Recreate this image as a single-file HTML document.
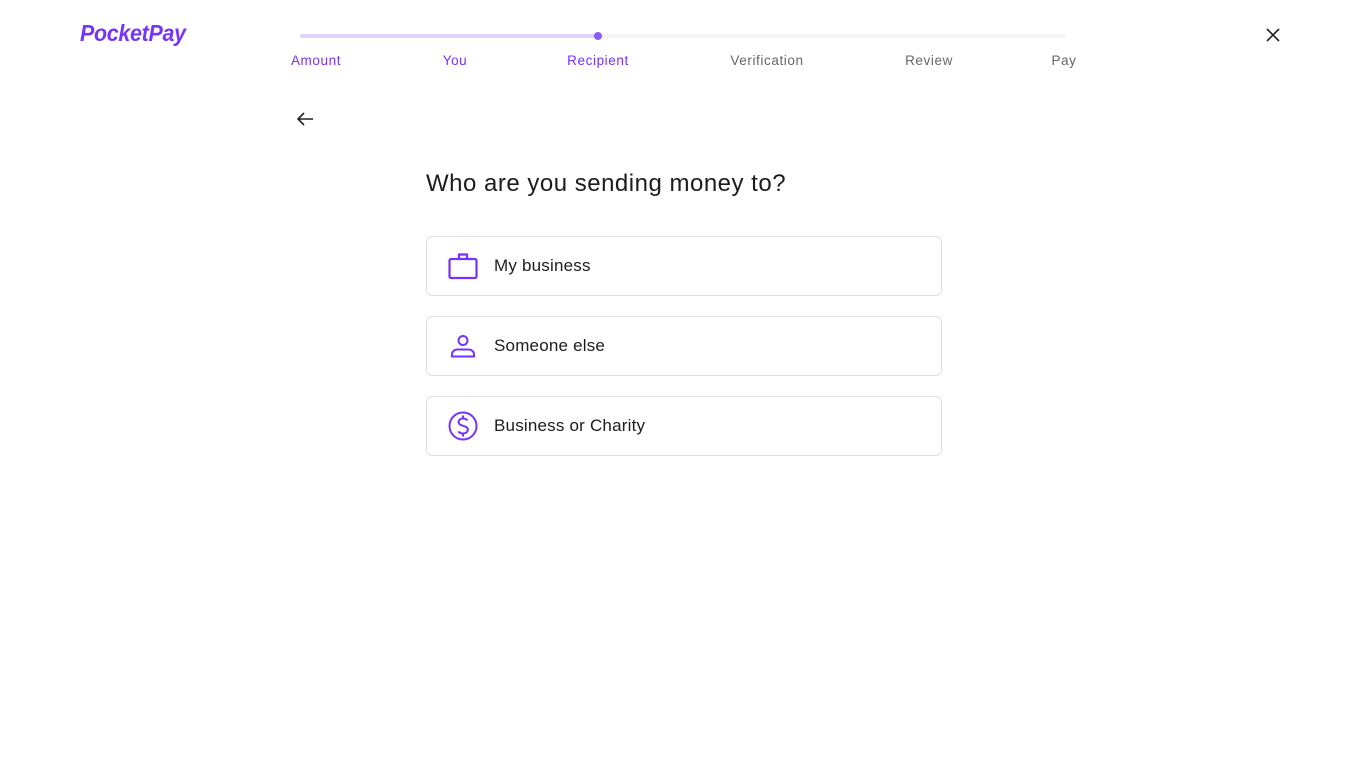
<!DOCTYPE html>
<html><head><style>
body{margin:0;width:1366px;height:768px;background:#fff;font-family:"Liberation Sans",sans-serif;position:relative;overflow:hidden}
.logo{position:absolute;left:80px;top:20px;font-size:23px;font-weight:bold;font-style:italic;color:#7633f9;letter-spacing:-0.3px;transform:scaleX(0.93);transform-origin:left}
.track{position:absolute;left:300px;top:34px;width:766px;height:4px;background:#f5f5f7;border-radius:2px}
.fill{position:absolute;left:300px;top:34px;width:298px;height:4px;background:#e0d2fd;border-radius:2px}
.dot{position:absolute;left:594px;top:32px;width:8px;height:8px;border-radius:50%;background:#8b5cf6}
.step{position:absolute;top:53px;font-size:13.5px;letter-spacing:0.6px;color:#666;transform:translateX(-50%)}
.step.a{color:#7633f9}
.h{position:absolute;left:426px;top:170px;font-size:24px;letter-spacing:0.5px;color:#1c1c1c}
.card{position:absolute;left:426px;width:514px;height:58px;border:1px solid #e0e0e0;border-radius:6px}
.card span{position:absolute;left:67px;top:19px;font-size:17px;letter-spacing:0.2px;color:#1c1c1c}
.card svg{position:absolute;left:20px;top:14px}
</style></head><body>
<div class="logo">PocketPay</div>
<div class="track"></div><div class="fill"></div><div class="dot"></div>
<div class="step a" style="left:316px">Amount</div>
<div class="step a" style="left:455px">You</div>
<div class="step a" style="left:598px">Recipient</div>
<div class="step" style="left:767px">Verification</div>
<div class="step" style="left:929px">Review</div>
<div class="step" style="left:1064px">Pay</div>
<svg style="position:absolute;left:1264px;top:26px" width="18" height="18" viewBox="0 0 18 18"><path d="M3 3L15 15M15 3L3 15" stroke="#222" stroke-width="1.6"/></svg>
<svg style="position:absolute;left:295px;top:110px" width="20" height="18" viewBox="0 0 20 18"><path d="M18 9H3M9 3L3 9L9 15" stroke="#222" stroke-width="1.6" fill="none"/></svg>
<div class="h">Who are you sending money to?</div>
<div class="card" style="top:236px"><svg width="32" height="30" viewBox="0 0 32 30"><rect x="2.5" y="8" width="27" height="19" rx="1.5" fill="none" stroke="#7633f9" stroke-width="2.2"/><path d="M12 8V3.5h8V8" fill="none" stroke="#7633f9" stroke-width="2.2"/></svg><span>My business</span></div>
<div class="card" style="top:316px"><svg width="32" height="30" viewBox="0 0 32 30"><circle cx="16" cy="9.5" r="4.5" fill="none" stroke="#7633f9" stroke-width="2"/><path d="M5 25.5v-2c0-3 2.5-5 5.5-5h11c3 0 5.5 2 5.5 5v2z" fill="none" stroke="#7633f9" stroke-width="2"/></svg><span>Someone else</span></div>
<div class="card" style="top:396px"><svg width="32" height="30" viewBox="0 0 32 30"><circle cx="16" cy="15" r="13.5" fill="none" stroke="#7633f9" stroke-width="2"/><path d="M20.5 9.5c-1-1.3-2.6-2-4.5-2c-2.6 0-4.4 1.5-4.4 3.6c0 4.8 9.2 2.6 9.2 7.7c0 2.2-2 3.7-4.8 3.7c-2 0-3.7-.8-4.6-2.2M16 4.5v3M16 22.5v3" fill="none" stroke="#7633f9" stroke-width="2"/></svg><span>Business or Charity</span></div>
</body></html>
